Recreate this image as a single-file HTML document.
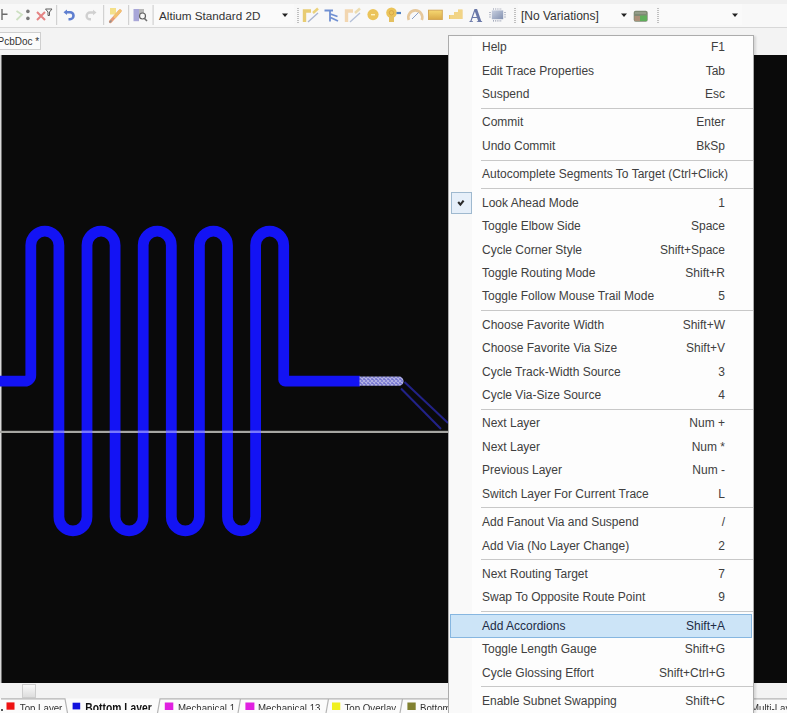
<!DOCTYPE html>
<html><head><meta charset="utf-8">
<style>
html,body{margin:0;padding:0;}
body{width:787px;height:713px;overflow:hidden;position:relative;background:#f2f2f2;font-family:"Liberation Sans",sans-serif;}
.abs{position:absolute;}
#toolbar{left:0;top:0;width:787px;height:28px;background:#f8f8f8;border-bottom:1px solid #d8d8d8;box-sizing:border-box;}
#tabstrip{left:0;top:28px;width:787px;height:27px;background:#f3f3f3;}
#tab{left:-2px;top:31.8px;width:43px;height:18.4px;background:#fbfbfb;border:1px solid #cfcfcf;box-sizing:border-box;font-size:10px;color:#333;line-height:15px;white-space:nowrap;overflow:hidden;}
#canvas{left:0;top:55px;width:787px;height:628px;background:#0a0a0a;}
#bottom{left:0;top:683px;width:787px;height:30px;background:#f1f1f1;}
#menu{left:448px;top:35px;width:306px;height:700px;background:#fdfdfd;border:1px solid #acacac;box-sizing:border-box;box-shadow:2px 1px 2px rgba(0,0,0,0.12);}
.it{position:absolute;left:0;width:304px;height:23.4px;font-size:12px;line-height:23.4px;color:#404040;white-space:nowrap;}
.it .l{position:absolute;left:33px;top:-0.8px;}
.it .r{position:absolute;right:28px;top:-0.8px;}
.sep{position:absolute;left:32px;width:272px;height:1px;background:#c8c8c8;}
.gut{position:absolute;left:0;top:0;width:23px;height:700px;background:#f9f9f9;}
.chk{position:absolute;left:2.2px;top:156px;width:21px;height:21.7px;background:#e6eff9;border:1px solid #9fb9cf;box-sizing:border-box;}
.chk svg{position:absolute;left:-1px;top:-1px;}
.hl{position:absolute;left:1px;width:302px;background:#cce4f7;border:1px solid #86b6e0;box-sizing:border-box;}
.tbtxt{font-size:12px;color:#333;white-space:nowrap;}
.lt{font-size:11px;color:#333;white-space:nowrap;transform:scaleY(1.22);transform-origin:0 0;}
</style></head><body>
<div id="toolbar" class="abs"></div>
<div class="abs" style="left:0;top:0;width:787px;height:4px;background:#f0f0f0;"></div>
<svg class="abs" style="left:0;top:0;filter:blur(0.3px)" width="787" height="28" viewBox="0 0 787 28">
  <defs>
    <linearGradient id="gold" x1="0" y1="0" x2="0" y2="1"><stop offset="0" stop-color="#f6d872"/><stop offset="1" stop-color="#d9a948"/></linearGradient>
    <linearGradient id="chipg" x1="0" y1="0" x2="1" y2="1"><stop offset="0" stop-color="#c8d0e0"/><stop offset="1" stop-color="#8290b0"/></linearGradient>
    <pattern id="grip" width="2" height="2" patternUnits="userSpaceOnUse"><rect width="2" height="1" fill="#c0c0c0"/></pattern>
  </defs>
  <!-- icon 1 -->
  <path d="M2 9 V20 M2.5 14.3 H7.5" stroke="#6a6a6a" stroke-width="1.4" fill="none"/>
  <!-- icon 2 -->
  <path d="M16.5 11 L22 14.6 L16.5 20" stroke="#cde0c2" stroke-width="1.8" fill="none"/>
  <circle cx="27.9" cy="11.4" r="1.8" fill="#767676"/>
  <circle cx="27.9" cy="18.4" r="1.8" fill="#767676"/>
  <!-- icon 3 -->
  <path d="M37 12 L45 20 M45 12 L37 20" stroke="#e58383" stroke-width="2" fill="none"/>
  <path d="M45.5 9 H52 L49.5 12 V15.5 H48 V12 Z" fill="none" stroke="#5e5e5e" stroke-width="1"/>
  <!-- separators -->
  <rect x="56" y="5" width="1.2" height="20" fill="#d2d2d2"/>
  <rect x="103" y="5" width="1.2" height="20" fill="#d2d2d2"/>
  <rect x="128" y="5" width="1.2" height="20" fill="#d2d2d2"/>
  <rect x="152.5" y="5" width="1.2" height="20" fill="#d2d2d2"/>
  <!-- undo -->
  <path d="M65.5 12.2 H70 A3.5 3.5 0 0 1 70 19.2 H68.5" stroke="#5f7fd0" stroke-width="2.6" fill="none"/>
  <path d="M63.5 12.2 L67 9.5 L67 15 Z" fill="#5f7fd0"/>
  <!-- redo -->
  <path d="M94.5 12.5 H90 A3.4 3.4 0 0 0 90 19.3 H91" stroke="#d0d0d0" stroke-width="2.4" fill="none"/>
  <path d="M96.5 12.5 L93 9.8 L93 15.2 Z" fill="#d0d0d0"/>
  <!-- pencil -->
  <rect x="110" y="8" width="6" height="6.5" fill="#f4e08a"/>
  <path d="M110.5 21.5 L120 11" stroke="#e89c78" stroke-width="3.2" stroke-linecap="round"/>
  <path d="M115 16.5 L120 11" stroke="#f2c070" stroke-width="3.2" stroke-linecap="round"/>
  <path d="M109.5 22.5 L111.5 20.5" stroke="#909090" stroke-width="1.5"/>
  <!-- component -->
  <rect x="133.5" y="9" width="5.5" height="12.2" fill="#a8a6d8"/>
  <rect x="139" y="9" width="5" height="5" fill="#b8b8b8"/>
  <circle cx="142.5" cy="16" r="3" fill="#f8f8f8" stroke="#606060" stroke-width="1.2"/>
  <path d="M144.5 18.5 L147 21" stroke="#707070" stroke-width="1.6"/>
  <!-- combo 1 -->
  <rect x="154" y="4" width="140" height="21" fill="#fafafa"/>
  <path d="M282 13.5 H288 L285 17 Z" fill="#222"/>
  <rect x="297" y="8" width="2" height="15" fill="url(#grip)"/>
  <!-- route icon gold -->
  <path d="M304.5 22 V11 H311" stroke="#e8cc72" stroke-width="3.4" fill="none"/>
  <path d="M313 13 L318 8.5" stroke="#ebd27a" stroke-width="2.5"/>
  <path d="M308 22 L318 13" stroke="#a8b4d0" stroke-width="1.3"/>
  <!-- blue T -->
  <path d="M324.5 10.5 H333 M330 10.5 V21.5 M330.5 14 L337.5 16.5 M330.5 17.5 L338 21" stroke="#7090d2" stroke-width="1.8" fill="none"/>
  <!-- pale route -->
  <path d="M346.5 22 V11 H353" stroke="#f2d6b0" stroke-width="3.4" fill="none"/>
  <path d="M355 13 L360 8.5" stroke="#ecdcb0" stroke-width="2.5"/>
  <path d="M350 22 L360 13" stroke="#b4c0d8" stroke-width="1.3"/>
  <!-- via -->
  <circle cx="373" cy="14.6" r="5.6" fill="#ebc45a"/>
  <rect x="371" y="14" width="4" height="1.4" fill="#fff3c0"/>
  <!-- pad -->
  <circle cx="391.5" cy="12.8" r="5.3" fill="#ebc45a"/>
  <circle cx="391.5" cy="12.8" r="2.2" fill="none" stroke="#d8a848" stroke-width="1"/>
  <rect x="389" y="16" width="5" height="6" fill="#e4c060"/>
  <path d="M396.5 13 H401" stroke="#4d7fc2" stroke-width="2.2"/>
  <!-- arc -->
  <path d="M408.8 20 A7 7 0 1 1 421.8 20" stroke="#e6c89c" stroke-width="2.6" fill="none"/>
  <path d="M412 19 L418.5 12.5" stroke="#8aa0c8" stroke-width="1"/>
  <!-- rect -->
  <rect x="428.5" y="10.2" width="13.8" height="9.3" fill="url(#gold)" stroke="#d4a858" stroke-width="1"/>
  <!-- stairs -->
  <path d="M449 19 H462.5 V9.5 H458 V12 H454 V15 H449 Z" fill="#ecc460"/>
  <path d="M451 15 V19 M453 15 V19 M455 12 V19 M457 12 V19 M459 9.5 V19 M461 9.5 V19" stroke="#fdf3d0" stroke-width="0.7"/>
  <!-- A -->
  <text x="469.3" y="22.3" font-family="Liberation Serif" font-weight="bold" font-size="18" fill="#6a78a8">A</text>
  <!-- chip -->
  <rect x="491.8" y="10.4" width="11.4" height="8.8" fill="url(#chipg)"/>
  <path d="M493 9 H502 M493 20.8 H502 M490 12 V18 M505 12 V18" stroke="#8a92a8" stroke-width="1.2" stroke-dasharray="1 1.2"/>
  <rect x="514" y="8" width="2" height="15" fill="url(#grip)"/>
  <!-- combo 2 -->
  <rect x="518" y="4" width="112" height="21" fill="#fafafa"/>
  <path d="M621 13.5 H627 L624 17 Z" fill="#222"/>
  <rect x="633.7" y="10.7" width="14" height="11" rx="2" fill="#7e8a74"/>
  <rect x="634.5" y="16" width="5.5" height="5" fill="#ab9078"/>
  <rect x="640" y="15.5" width="7" height="5.5" fill="#5fae5a"/>
  <path d="M635 13 H646" stroke="#a8ae9c" stroke-width="1"/>
  <rect x="657" y="8" width="2" height="15" fill="url(#grip)"/>
  <rect x="660" y="4" width="82" height="21" fill="#fafafa"/>
  <path d="M732 13.5 H738 L735 17 Z" fill="#222"/>
</svg>
<div class="abs tbtxt" style="left:159px;top:9px;font-size:11.7px;">Altium Standard 2D</div>
<div class="abs tbtxt" style="left:521px;top:9px;font-size:12px;">[No Variations]</div>

<div id="tabstrip" class="abs"></div>
<div id="tab" class="abs"><span style="position:absolute;left:-1.5px;top:1.5px">PcbDoc *</span></div>
<div id="canvas" class="abs"></div>
<svg class="abs" style="left:0;top:0" width="787" height="713" viewBox="0 0 787 713">
  <defs>
    <pattern id="hatch" width="4" height="4" patternUnits="userSpaceOnUse" patternTransform="translate(360 377)">
      <rect width="4" height="4" fill="#7272d0"/>
      <path d="M-1 -1 L5 5 M5 -1 L-1 5" stroke="#b4b4e4" stroke-width="1.1"/>
    </pattern>
  </defs>
  <rect x="0" y="55" width="1.5" height="628" fill="#d8d8d8"/>
  <path d="M -5 381.2 L 24.80 381.2 A 6 6 0 0 0 30.80 375.2 L 30.80 245.25 A 14.05 14.05 0 0 1 58.90 245.25 L 58.90 516.85 A 14.05 14.05 0 0 0 87.00 516.85 L 87.00 245.25 A 14.05 14.05 0 0 1 115.10 245.25 L 115.10 516.85 A 14.05 14.05 0 0 0 143.20 516.85 L 143.20 245.25 A 14.05 14.05 0 0 1 171.30 245.25 L 171.30 516.85 A 14.05 14.05 0 0 0 199.40 516.85 L 199.40 245.25 A 14.05 14.05 0 0 1 227.50 245.25 L 227.50 516.85 A 14.05 14.05 0 0 0 255.60 516.85 L 255.60 245.25 A 14.05 14.05 0 0 1 283.70 245.25 L 283.70 379.7 A 1.5 1.5 0 0 0 285.20 381.2 L 360 381.2" fill="none" stroke="#1313f4" stroke-width="10.8" stroke-linejoin="round"/>
  <path d="M 359.5 376.6 H 399 A 4.6 4.6 0 0 1 399 385.8 H 359.5 Z" fill="url(#hatch)"/>
  <path d="M 404.5 382 L 448 423" stroke="#222288" stroke-width="2"/>
  <path d="M 401 388.5 L 441 429" stroke="#222288" stroke-width="2"/>
  <rect x="0" y="430.8" width="448" height="2.2" fill="#a6a6a2"/><rect x="53.50" y="430.8" width="10.8" height="2.2" fill="#7878ff"/><rect x="81.60" y="430.8" width="10.8" height="2.2" fill="#7878ff"/><rect x="109.70" y="430.8" width="10.8" height="2.2" fill="#7878ff"/><rect x="137.80" y="430.8" width="10.8" height="2.2" fill="#7878ff"/><rect x="165.90" y="430.8" width="10.8" height="2.2" fill="#7878ff"/><rect x="194.00" y="430.8" width="10.8" height="2.2" fill="#7878ff"/><rect x="222.10" y="430.8" width="10.8" height="2.2" fill="#7878ff"/><rect x="250.20" y="430.8" width="10.8" height="2.2" fill="#7878ff"/>
</svg>
<div id="bottom" class="abs"></div>
<svg class="abs" style="left:0;top:683px" width="787" height="30" viewBox="0 683 787 30">
  <defs><linearGradient id="thumb" x1="0" y1="0" x2="0" y2="1"><stop offset="0" stop-color="#fafafa"/><stop offset="1" stop-color="#dcdcdc"/></linearGradient></defs>
  <rect x="0" y="683" width="787" height="15.5" fill="#f3f3f3"/>
  <rect x="22.5" y="684.5" width="13" height="13" fill="url(#thumb)" stroke="#cdcdcd" stroke-width="1"/>
  <rect x="0" y="698.5" width="787" height="14.5" fill="#fbfbfb"/>
  <path d="M1 698.8 H65 L67.5 713" stroke="#b4b4b4" stroke-width="1.2" fill="none"/>
  <path d="M157.5 713 L160 698.8 H240" stroke="#b4b4b4" stroke-width="1.2" fill="none"/>
  <path d="M238 713 L240.5 698.8 H328" stroke="#b4b4b4" stroke-width="1.2" fill="none"/>
  <path d="M326 713 L328.5 698.8 H402" stroke="#b4b4b4" stroke-width="1.2" fill="none"/>
  <path d="M400 713 L402.5 698.8 H450" stroke="#b4b4b4" stroke-width="1.2" fill="none"/>
  <path d="M754 698.8 H787" stroke="#b4b4b4" stroke-width="1.2" fill="none"/>
  <rect x="1" y="709" width="2" height="2" fill="#555"/>
  <rect x="6.5" y="702.4" width="8" height="7.3" fill="#ee1111"/>
  <rect x="72.6" y="702.7" width="7.6" height="6.7" fill="#1111dd"/>
  <rect x="164.8" y="702.5" width="8.5" height="7.5" fill="#e020e0"/>
  <rect x="245.4" y="702.5" width="9" height="7.5" fill="#e020e0"/>
  <rect x="332" y="702.5" width="8.3" height="7.5" fill="#f0f020"/>
  <rect x="407.4" y="702.5" width="8.3" height="7.5" fill="#808030"/>
</svg>
<div class="abs" style="left:0;top:699px;width:787px;height:11px;overflow:hidden;">
<div class="abs lt" style="left:19.8px;top:1.8px;font-size:9.7px;">Top Layer</div>
<div class="abs lt" style="left:85.3px;top:1.8px;font-size:10.3px;font-weight:bold;color:#111;">Bottom Layer</div>
<div class="abs lt" style="left:178px;top:1.8px;font-size:9.7px;">Mechanical 1</div>
<div class="abs lt" style="left:258px;top:1.8px;font-size:9.7px;">Mechanical 13</div>
<div class="abs lt" style="left:344.5px;top:1.8px;font-size:9.7px;">Top Overlay</div>
<div class="abs lt" style="left:420px;top:1.8px;font-size:9.7px;">Bottom Layer</div>
<div class="abs lt" style="left:751px;top:1.8px;font-size:9.7px;">Multi-Layer</div>
</div>

<div id="menu" class="abs">
<div class="gut"></div>
<div class="hl" style="top:577.8px;height:24.2px"></div>
<div class="chk"><svg width="21" height="22" viewBox="0 0 21 22"><path d="M7.2 10 L9.4 12.6 L12.6 8.6" stroke="#2a2a2a" stroke-width="2.1" fill="none"/></svg></div>
<div class="it" style="top:1.0px"><span class="l">Help</span><span class="r">F1</span></div>
<div class="it" style="top:24.4px"><span class="l">Edit Trace Properties</span><span class="r">Tab</span></div>
<div class="it" style="top:47.8px"><span class="l">Suspend</span><span class="r">Esc</span></div>
<div class="sep" style="top:71.8px"></div>
<div class="it" style="top:76.2px"><span class="l">Commit</span><span class="r">Enter</span></div>
<div class="it" style="top:99.7px"><span class="l">Undo Commit</span><span class="r">BkSp</span></div>
<div class="sep" style="top:123.7px"></div>
<div class="it" style="top:128.1px"><span class="l">Autocomplete Segments To Target (Ctrl+Click)</span><span class="r"></span></div>
<div class="sep" style="top:152.1px"></div>
<div class="it" style="top:156.5px"><span class="l">Look Ahead Mode</span><span class="r">1</span></div>
<div class="it" style="top:179.9px"><span class="l">Toggle Elbow Side</span><span class="r">Space</span></div>
<div class="it" style="top:203.3px"><span class="l">Cycle Corner Style</span><span class="r">Shift+Space</span></div>
<div class="it" style="top:226.8px"><span class="l">Toggle Routing Mode</span><span class="r">Shift+R</span></div>
<div class="it" style="top:250.1px"><span class="l">Toggle Follow Mouse Trail Mode</span><span class="r">5</span></div>
<div class="sep" style="top:274.1px"></div>
<div class="it" style="top:278.6px"><span class="l">Choose Favorite Width</span><span class="r">Shift+W</span></div>
<div class="it" style="top:302.0px"><span class="l">Choose Favorite Via Size</span><span class="r">Shift+V</span></div>
<div class="it" style="top:325.4px"><span class="l">Cycle Track-Width Source</span><span class="r">3</span></div>
<div class="it" style="top:348.8px"><span class="l">Cycle Via-Size Source</span><span class="r">4</span></div>
<div class="sep" style="top:372.8px"></div>
<div class="it" style="top:377.2px"><span class="l">Next Layer</span><span class="r">Num +</span></div>
<div class="it" style="top:400.6px"><span class="l">Next Layer</span><span class="r">Num *</span></div>
<div class="it" style="top:424.0px"><span class="l">Previous Layer</span><span class="r">Num -</span></div>
<div class="it" style="top:447.4px"><span class="l">Switch Layer For Current Trace</span><span class="r">L</span></div>
<div class="sep" style="top:471.4px"></div>
<div class="it" style="top:475.9px"><span class="l">Add Fanout Via and Suspend</span><span class="r">/</span></div>
<div class="it" style="top:499.3px"><span class="l">Add Via (No Layer Change)</span><span class="r">2</span></div>
<div class="sep" style="top:523.3px"></div>
<div class="it" style="top:527.8px"><span class="l">Next Routing Target</span><span class="r">7</span></div>
<div class="it" style="top:551.1px"><span class="l">Swap To Opposite Route Point</span><span class="r">9</span></div>
<div class="sep" style="top:575.1px"></div>
<div class="it" style="top:579.6px;color:#1d2b45"><span class="l">Add Accordions</span><span class="r">Shift+A</span></div>
<div class="it" style="top:603.0px"><span class="l">Toggle Length Gauge</span><span class="r">Shift+G</span></div>
<div class="it" style="top:626.4px"><span class="l">Cycle Glossing Effort</span><span class="r">Shift+Ctrl+G</span></div>
<div class="sep" style="top:650.4px"></div>
<div class="it" style="top:654.9px"><span class="l">Enable Subnet Swapping</span><span class="r">Shift+C</span></div>
</div>
</body></html>
